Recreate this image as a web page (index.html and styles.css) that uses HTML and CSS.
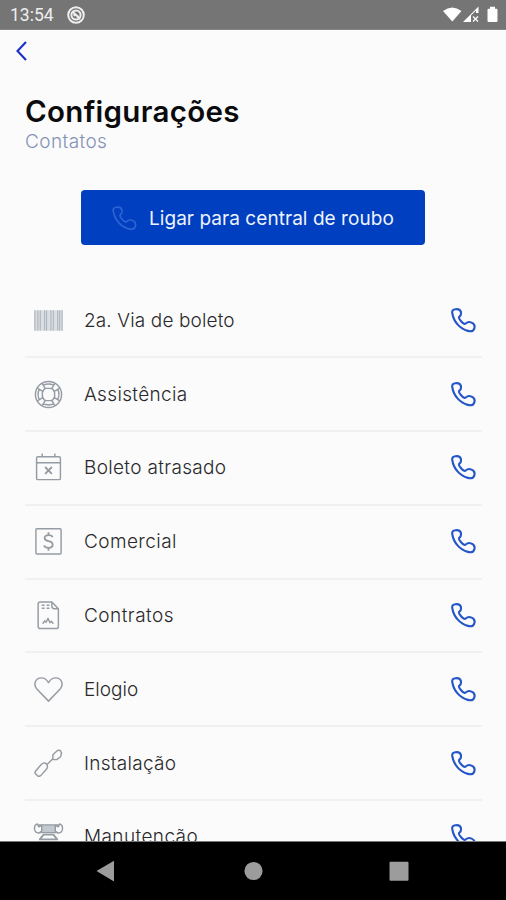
FILE: index.html
```html
<!DOCTYPE html>
<html lang="pt-BR">
<head>
<meta charset="utf-8">
<title>Configurações</title>
<link rel="stylesheet" href="styles.css">
</head>
<body>
<svg class="defs" width="0" height="0">
  <symbol id="phone" viewBox="0 0 26 26"><path d="M1.3 5.2C.9 2.7 2.3 1.6 4.6 1.3C7.800 .9 9.700 1.600 10.200 4C10.800 6.500 10.200 7.900 8.800 8.900C7.600 10 8.200 11.200 10.100 13.300C12.500 16.100 14 17.300 15.600 15.900C17.300 14.300 18.800 14.100 21.400 15.200C24.600 16.500 25 18.400 24.300 21C23.400 24.100 21.200 24.800 17.500 23.800C9.200 21.600 2.700 14.200 1.300 5.200Z"/></symbol>
</svg>
<div class="screen">
  <header class="status">
    <span class="clock">13:54</span>
    <svg class="notice" viewBox="0 0 20 20"><circle cx="10" cy="10" r="7.8"/><circle cx="10" cy="10" r="4.6"/><path d="M6.5 6.5l7.5 7.5M7.5 10.5l2-1 3 2.5"/></svg>
    <svg class="signals" viewBox="0 0 56 20"><path d="M0 6Q9.300 -1 18.500 6L9.300 16.500Z"/><path d="M20 17L35.500 1.500V8H33V5.500L28 10.500V17Z"/><path d="M30 11.500l5 5M35 11.500l-5 5" stroke="#fff" stroke-width="1.300"/><path d="M47 1.800h5v2h1.500q1 0 1 1V16q0 1-1 1h-8q-1 0-1-1V4.800q0-1 1-1H47z"/></svg>
  </header>
  <main class="content">
    <svg class="back" viewBox="0 0 14 22"><path d="M11 2L2.500 11L11 20"/></svg>
    <h1>Configurações</h1>
    <p class="subtitle">Contatos</p>
    <div class="call"><svg class="phone"><use href="#phone"/></svg><span>Ligar para central de roubo</span></div>
    <ul class="contacts">
      <li><svg class="icon bars" viewBox="0 0 32 32"><path class="pale" d="M1 5.500h30v21H1z"/><path d="M2 5.500v21M5 5.500v21M7.500 5.500v21M12 5.500v21M14 5.500v21M18.500 5.500v21M21 5.500v21M25.500 5.500v21M27.500 5.500v21M30 5.500v21"/></svg><span class="l1">2a. Via de boleto</span><svg class="phone"><use href="#phone"/></svg></li>
      <li><svg class="icon" viewBox="0 0 32 32"><circle cx="16" cy="16" r="13.500"/><path d="M11.500 10.500L13.800 9.700H18.200L20.500 10.500L22.300 13.800V18.200L20.500 21.500L18.200 22.300H13.800L11.500 21.500L9.700 18.200V13.800ZM9.500 4.500L12.700 10M4.500 9.500L10 12.700M22.500 4.500L19.300 10M27.500 9.500L22 12.700M4.500 22.500L10 19.300M9.500 27.500L12.700 22M27.500 22.500L22 19.300M22.500 27.500L19.300 22M10.500 6.500Q16 4 21.500 6.500M10.500 25.500Q16 28 21.500 25.500M6.500 10.500Q4 16 6.500 21.500M25.500 10.500Q28 16 25.500 21.500"/></svg><span class="l2">Assistência</span><svg class="phone"><use href="#phone"/></svg></li>
      <li><svg class="icon" viewBox="0 0 32 32"><rect x="3.700" y="5" width="24.600" height="23.500" rx="1.500"/><path d="M3.700 11h24.600M9.500 1.500V5M22.500 1.500V5"/><path class="bold" d="M12.500 15.500l7 7M19.500 15.500l-7 7"/></svg><span class="l3">Boleto atrasado</span><svg class="phone"><use href="#phone"/></svg></li>
      <li><svg class="icon" viewBox="0 0 32 32"><rect x="3" y="2.800" width="26" height="26" rx="1"/><path class="bold" d="M20.300 11.500Q19.500 9.500 16 9.500Q12 9.500 12 12.500Q12 15 16 15.700Q20.300 16.400 20.300 19.400Q20.300 22.500 16 22.500Q12 22.500 11.500 20M16 6.500v3M16 22.500v3"/></svg><span class="l4">Comercial</span><svg class="phone"><use href="#phone"/></svg></li>
      <li><svg class="icon" viewBox="0 0 32 32"><path d="M19.500 2H7.500Q5.300 2 5.300 4.200V27Q5.300 29.500 7.500 29.500H24Q26.200 29.500 26.200 27.500V9ZM19.500 2V6.500Q19.500 9 22 9H26M9 5.500h3M14 5.500h3M9 8.500h3M14 8.500h3M10 24.500L12 21.500l1.500 1.500 2-4 2 4.500 1.500-1.500 2 2.500"/></svg><span class="l5">Contratos</span><svg class="phone"><use href="#phone"/></svg></li>
      <li><svg class="icon" viewBox="0 0 32 32"><path d="M16 28L4 15.500C0 10.500 2.500 4.200 8.300 4C12.500 3.900 14.500 6.300 16 9C17.500 6.300 19.500 3.900 23.700 4C29.500 4.200 32 10.500 28 15.500Z"/></svg><span class="l6">Elogio</span><svg class="phone"><use href="#phone"/></svg></li>
      <li><svg class="icon" viewBox="0 0 32 32"><path d="M2.500 24L8.500 17Q11.500 14.500 14 16.500Q16 19 13.800 22L8 28.500Q6.500 30 4.500 28.500L3 27Q1.500 25.500 2.500 24ZM14 17.500L21 10.500M20.500 11L20.500 7L25 2.800Q26 2 28 2.500L29.500 5L28.500 9L24.500 12L21 12Z"/></svg><span class="l7">Instalação</span><svg class="phone"><use href="#phone"/></svg></li>
      <li><svg class="icon" viewBox="0 0 32 32"><path class="fill" d="M6 4h20v8H6z"/><path class="paper" d="M4.500 3L6 6L9 4.500V10.500L6 12.500Q1.500 12 1.500 7.500Q1.500 4 4.500 3ZM27.500 3L26 6L23 4.500V10.500L26 12.500Q30.500 12 30.500 7.500Q30.500 4 27.500 3Z"/><path class="bold" d="M11 14H21L25 19H7ZM5 21.500h22M4 25h24"/></svg><span class="l8">Manutenção</span><svg class="phone"><use href="#phone"/></svg></li>
    </ul>
  </main>
  <nav class="navbar">
    <svg viewBox="0 0 24 24"><path d="M2.500 12L20 1.800V22.500Z"/></svg>
    <svg viewBox="0 0 24 24"><circle cx="12.500" cy="12" r="9.100"/></svg>
    <svg viewBox="0 0 24 24"><rect x="2.500" y="2.800" width="19" height="19" rx="1"/></svg>
  </nav>
</div>
</body>
</html>
```

FILE: styles.css
```css
* { box-sizing: border-box; }
body { margin: 0; background: #fbfbfb; font-family: Inter, sans-serif; }
svg { display: block; flex: none; fill: none; }
.defs { position: absolute; }
.screen { height: 900px; display: flex; flex-direction: column; overflow: hidden; }
.status { flex: none; height: 30px; background: #757575; border-bottom: 1px solid #858585; display: flex; align-items: center; padding: 1px 7px 0 10px; }
.clock { font: 400 17.5px/20px Roboto, sans-serif; color: #eee; width: 46px; white-space: nowrap; }
.notice { width: 20px; height: 20px; margin-left: 10px; stroke: #eee; stroke-width: 2; }
.signals { width: 56px; height: 20px; margin-left: auto; fill: #fff; }
.content { flex: 1; min-height: 0; overflow: hidden; padding: 10px 25px 0; border-bottom: 1px solid #777; }
.back { width: 14px; height: 22px; margin-left: -10px; stroke: #1c30c8; stroke-width: 2.1; }
h1 { margin: 30px 0 0; font-size: 29.5px; font-weight: 600; line-height: 38px; letter-spacing: .3px; color: #0b0b0d; white-space: nowrap; }
.subtitle { margin: 0; font-size: 19px; font-weight: 350; line-height: 24px; letter-spacing: .4px; color: #8492b5; }
.call { width: 344px; height: 55px; margin: 36px auto 0 56px; border-radius: 4px; background: #003fc0; color: #eef3ff; display: flex; align-items: center; padding: 1px 0 0 31px; gap: 12px; font-size: 19px; letter-spacing: .05px; white-space: nowrap; }
.phone { width: 25px; height: 25px; stroke: #2456c8; stroke-width: 2.2; }
.call .phone { stroke: #2d63d2; stroke-width: 1.7; }
.contacts { list-style: none; margin: 39.4px 0 0; padding: 0; }
.contacts li { height: 73.8px; border-bottom: 2px solid #eff0f1; display: flex; align-items: center; padding: 0 6px 0 8px; margin-right: -1px; font-size: 19px; font-weight: 350; color: #29292b; white-space: nowrap; }
.contacts .phone { margin-left: auto; }
.l1 { letter-spacing: .13px; }
.l2 { letter-spacing: .33px; }
.l3 { letter-spacing: .33px; }
.l4 { letter-spacing: .42px; }
.l5 { letter-spacing: .48px; }
.l6 { letter-spacing: 0; }
.l7 { letter-spacing: .27px; }
.l8 { letter-spacing: .4px; }
.icon { width: 31px; height: 31px; margin-right: 20px; stroke: #969ca3; stroke-width: 1.5; stroke-linejoin: round; }
.bars { stroke: #b0b5bc; stroke-width: 1.1; }
.pale { fill: #d9dee2; stroke: none; }
.fill { fill: #c3c9d0; }
.paper { fill: #fbfbfb; }
.bold { stroke-width: 1.9; }
.navbar { flex: none; height: 58px; background: #000; display: flex; justify-content: space-between; align-items: center; padding: 0 95px 0 94px; }
.navbar svg { width: 24px; height: 24px; fill: #9c9c9c; }
```
